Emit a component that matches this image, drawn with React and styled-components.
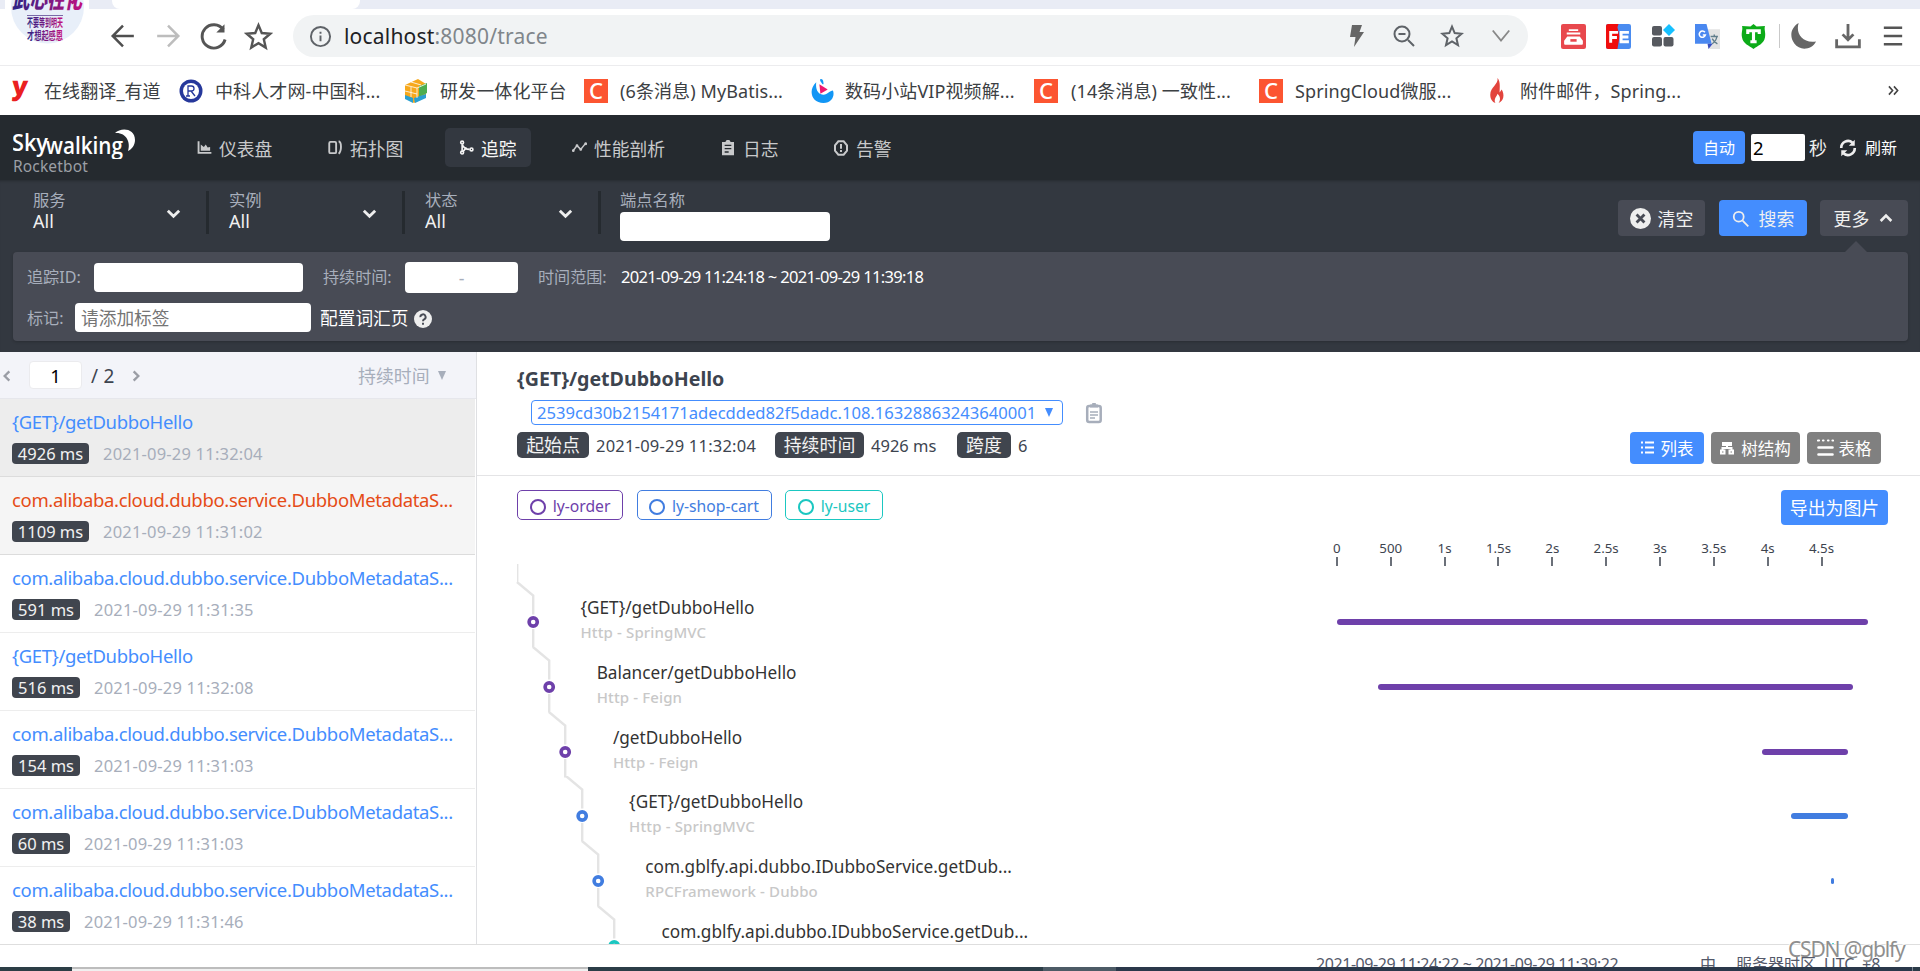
import React from 'react'
import styled, { createGlobalStyle } from 'styled-components';

const GlobalStyle = createGlobalStyle`
  * { box-sizing: border-box; }
  body {
    margin: 0;
    overflow: hidden;
    background: #fff;
    font-family: "Noto Sans", "Noto Sans CJK SC", sans-serif;
    color: #3d444f;
  }
  input { font-family: inherit; }
  svg { display: block; flex: none; }
`;

const Page = styled.div`
  width: 1920px;
  height: 971px;
  overflow: hidden;
  display: flex;
  flex-direction: column;
  position: relative;
`;

/* the small top padding centres the glyphs optically inside a row */
const Text = styled.span`
  white-space: nowrap;
  flex: none;
  line-height: 1.2;
  padding-top: ${(p) => p.$pt ?? 2}px;
  font-size: ${(p) => p.$size || 18}px;
  color: ${(p) => p.$color || 'inherit'};
  font-weight: ${(p) => p.$weight || 400};
  letter-spacing: ${(p) => p.$ls || 0}px;
  width: ${(p) => (p.$w ? p.$w + 'px' : 'auto')};
  margin-left: ${(p) => p.$ml || 0}px;
`;

const Icon = styled.svg.attrs((p) => ({
  width: p.$s || 20,
  height: p.$h || p.$s || 20,
  viewBox: p.viewBox || '0 0 24 24',
  fill: p.fill || 'none',
  stroke: p.stroke || 'none',
}))`
  margin-left: ${(p) => p.$ml || 0}px;
  margin-top: ${(p) => p.$mt || 0}px;
`;

/* ---------- browser ---------- */

const TabStrip = styled.div`
  height: 9px;
  flex: none;
  background: #e9ecf5;
  padding-left: 112px;
`;
const ActiveTab = styled.div`
  width: 248px;
  height: 9px;
  background: #fff;
  border-radius: 0 0 8px 8px;
`;
const Toolbar = styled.div`
  height: 57px;
  flex: none;
  display: flex;
  align-items: center;
  border-bottom: 1px solid #ececee;
  padding: 0 0 2px 110px;
`;
const Avatar = styled.div`
  position: absolute;
  left: 5px;
  top: 0;
  width: 84px;
  height: 48px;
  background: #fff;
`;
const UrlBox = styled.div`
  width: 1235px;
  height: 42px;
  margin-left: 20px;
  border-radius: 21px;
  background: #f1f3f4;
  display: flex;
  align-items: center;
  padding-left: 16px;
  flex: none;
`;
const Separator = styled.div`
  width: 1px;
  height: 24px;
  background: #c9c9c9;
  margin-left: 13px;
`;
const Bookmarks = styled.div`
  height: 49px;
  flex: none;
  display: flex;
  align-items: center;
`;
const Bookmark = styled.div`
  width: ${(p) => p.$w}px;
  display: flex;
  align-items: center;
  flex: none;
`;
const BookmarkIcon = styled.div`
  width: ${(p) => p.$w}px;
  flex: none;
  display: flex;
  justify-content: center;
`;
const BookmarkText = styled(Text).attrs({ $size: 18, $color: '#3c4043' })`
  letter-spacing: 0.1px;
`;
const Youdao = styled.div`
  color: #ea2020;
  font-size: 26px;
  font-weight: 900;
  line-height: 36px;
  margin-top: -11px;
  transform: skewX(-5deg);
`;
const CBadge = styled.div`
  width: 24px;
  height: 24px;
  background: #fc5531;
  display: flex;
  align-items: center;
  justify-content: center;
`;

/* ---------- rocketbot header ---------- */

const Header = styled.header`
  height: 65px;
  flex: none;
  background: #252a2f;
  display: flex;
  align-items: center;
  color: #d3d4d5;
`;
const Brand = styled.div`
  width: 183px;
  padding: 12px 0 0 13px;
  height: 65px;
  display: flex;
  flex-direction: column;
`;
const BrandName = styled.div`
  font-size: 15.5px;
  line-height: 18px;
  letter-spacing: 0.15px;
  margin-top: -2px;
  color: #9b9fa5;
`;
const Nav = styled.nav`
  display: flex;
  flex: 1;
  gap: 27px;
  align-items: center;
`;
const NavItem = styled.a`
  height: 39px;
  width: ${(p) => p.$w}px;
  padding: 0 0 0 14px;
  border-radius: 5px;
  display: flex;
  align-items: center;
  gap: 7px;
  background: ${(p) => (p.$active ? '#333840' : 'transparent')};
  color: ${(p) => (p.$active ? '#f5f5f5' : '#c8c9cb')};
`;
const NavText = styled(Text).attrs({ $size: 17.8, $pt: 5 })``;
const Reload = styled.div`
  width: 227px;
  display: flex;
  align-items: center;
`;
const AutoButton = styled.div`
  width: 52px;
  height: 33px;
  border-radius: 4px;
  background: #448dfe;
  color: #fff;
  display: flex;
  align-items: center;
  justify-content: center;
`;
const SecondsInput = styled.input`
  width: 54px;
  height: 27px;
  margin: 0 4px 0 6px;
  border: 0;
  border-radius: 2px;
  padding: 0 0 0 2px;
  font-size: 18.5px;
  color: #000;
`;

/* ---------- filter ---------- */

const Filters = styled.section`
  height: 172px;
  flex: none;
  background: #333840;
  padding: 0 12px 0 13px;
  box-shadow: inset 0 3px 3px -2px rgba(0, 0, 0, .25);
`;
const FilterTop = styled.div`
  height: 72px;
  display: flex;
  padding-top: 11px;
`;
const Select = styled.div`
  width: 196px;
  height: 43px;
  padding: 0 24px 0 20px;
  border-right: 3px solid #252a2f;
  display: flex;
  align-items: center;
  justify-content: space-between;
`;
const SelectText = styled.div`
  display: flex;
  flex-direction: column;
  gap: 1px;
  margin-top: -1px;
`;
const Endpoint = styled.div`
  padding-left: 19px;
  flex: 1;
  display: flex;
  flex-direction: column;
  gap: 1px;
`;
const Field = styled.input`
  width: ${(p) => p.$w}px;
  height: ${(p) => p.$h || 29}px;
  flex: none;
  border: 0;
  border-radius: 4px;
  padding: 1px 6px 0;
  font-size: 17.7px;
  text-align: ${(p) => (p.$center ? 'center' : 'left')};
  &::placeholder { color: ${(p) => (p.$center ? '#a7aebb' : '#757575')}; }
`;
const FilterButton = styled.button`
  width: ${(p) => p.$w}px;
  height: 36px;
  margin: 9px 0 0 ${(p) => p.$ml || 0}px;
  padding: 0;
  border: 0;
  border-radius: 4px;
  font-family: inherit;
  background: ${(p) => (p.$primary ? '#448dfe' : '#484b55')};
  color: #f0f0f0;
  display: flex;
  align-items: center;
  justify-content: center;
  gap: ${(p) => p.$gap || 8}px;
`;
const More = styled.div`
  height: 89px;
  border-radius: 4px;
  background: #484b55;
  color: #a7aebb;
  padding: 9px 0 0 14px;
  position: relative;
  box-shadow: 0 1px 3px rgba(0, 0, 0, .2);
  &::before {
    content: '';
    position: absolute;
    right: 41px;
    top: -11px;
    border: 11px solid transparent;
    border-top: 0;
    border-bottom-color: #484b55;
  }
`;
const MoreRow = styled.div`
  height: ${(p) => p.$h}px;
  display: flex;
  align-items: center;
`;

/* ---------- trace list ---------- */

const Main = styled.main`
  height: 593px;
  flex: none;
  display: flex;
  border-bottom: 1px solid #dedede;
`;
const TraceList = styled.aside`
  width: 477px;
  flex: none;
  border-right: 1px solid #dfe0e3;
  overflow: hidden;
`;
const ListHead = styled.div`
  height: 47px;
  background: #f3f4f9;
  border-bottom: 1px solid #e6e7ec;
  display: flex;
  align-items: center;
`;
const PageInput = styled.input`
  width: 53px;
  height: 28px;
  margin: 0 8px 0 15px;
  border: 1px solid #ebebee;
  border-radius: 4px;
  text-align: center;
  font-size: 18.5px;
  color: #000;
  padding: 1px 0 0;
`;
const Trace = styled.div`
  height: 78px;
  width: 475px;
  padding: 9px 12px 0;
  border-bottom: 1px solid ${(p) => (p.$bg ? '#dcdcdc' : '#ededed')};
  background: ${(p) => p.$bg || '#fff'};
`;
const TraceMeta = styled.div`
  display: flex;
  align-items: center;
  height: 21px;
  margin-top: 8px;
  gap: 14px;
`;
const TraceTitle = styled.div`
  height: 27px;
  line-height: 27px;
  font-size: 18.5px;
  letter-spacing: -0.34px;
  white-space: nowrap;
  color: ${(p) => (p.$error ? '#e54c17' : '#448dfe')};
`;
const Duration = styled.div`
  width: ${(p) => p.$w}px;
  height: 21px;
  border-radius: 4px;
  background: #40454e;
  color: #f2f2f2;
  display: flex;
  align-items: center;
  justify-content: center;
`;

/* ---------- trace detail ---------- */

const Detail = styled.section`
  flex: 1;
  overflow: hidden;
`;
const DetailHead = styled.div`
  height: 124px;
  border-bottom: 1px solid #e4e4e6;
  padding: 13px 39px 0 40px;
`;
const TraceIdRow = styled.div`
  display: flex;
  align-items: center;
  margin: 9px 0 0 14px;
`;
const TraceId = styled.div`
  width: 532px;
  height: 25px;
  border: 1px solid #448dfe;
  border-radius: 4px;
  color: #448dfe;
  display: flex;
  align-items: center;
  padding-left: 5px;
`;
const Summary = styled.div`
  display: flex;
  margin-top: 7px;
  height: 32px;
`;
const Tag = styled.div`
  width: ${(p) => p.$w}px;
  height: 26px;
  margin: 0 7px 0 ${(p) => p.$ml || 0}px;
  border-radius: 5px;
  background: #40454e;
  color: #f2f2f2;
  display: flex;
  align-items: center;
  justify-content: center;
`;
const SummaryValue = styled.div`
  height: 26px;
  display: flex;
  align-items: center;
`;
const ViewButtons = styled.div`
  margin-left: auto;
  display: flex;
  gap: 7px;
`;
const ViewButton = styled.div`
  width: ${(p) => p.$w}px;
  height: 32px;
  border-radius: 4px;
  background: ${(p) => (p.$active ? '#448dfe' : '#808080')};
  color: #fff;
  display: flex;
  align-items: center;
  justify-content: center;
  gap: ${(p) => p.$gap || 7}px;
`;
const Legend = styled.div`
  height: 49px;
  padding: 14px 32px 0 40px;
  display: flex;
  align-items: flex-start;
`;
const LegendItem = styled.div`
  width: ${(p) => p.$w}px;
  height: 30px;
  margin-right: 13.5px;
  border: 1px solid ${(p) => p.$color};
  color: ${(p) => p.$color};
  border-radius: 5px;
  display: flex;
  align-items: center;
  justify-content: center;
  gap: 7px;
`;
const Ring = styled.i`
  width: 16px;
  height: 16px;
  border: 2.5px solid currentColor;
  border-radius: 50%;
  margin-top: 4px;
`;
const ExportButton = styled.div`
  width: 107px;
  height: 35px;
  margin-left: auto;
  border-radius: 4px;
  background: #448dfe;
  color: #fff;
  display: flex;
  align-items: center;
  justify-content: center;
`;
const AxisRow = styled.div`
  height: 57px;
  display: flex;
  align-items: flex-start;
  justify-content: space-between;
  padding: 14px 0 0 40px;
`;
const Axis = styled.div`
  display: flex;
  width: 610px;
`;
const TickMark = styled.div`
  width: 53.85px;
  display: flex;
  flex-direction: column;
  align-items: center;
  &::after {
    content: '';
    width: 2px;
    height: 9px;
    background: #6b7079;
  }
`;
const Span = styled.div`
  height: 64.75px;
  display: flex;
  padding-left: ${(p) => 38 + p.$depth * 16.2}px;
`;
const SpanText = styled.div`
  flex: 1;
  display: flex;
  flex-direction: column;
  padding: 14px 0 0 35.5px;
  gap: 2.5px;
`;
const Track = styled.div`
  width: 583px;
  flex: none;
  padding-top: 37px;
`;
const Bar = styled.div`
  height: 6px;
  border-radius: 3px;
  background: ${(p) => p.$color};
`;

/* ---------- bottom ---------- */

const Footer = styled.footer`
  height: 22px;
  flex: none;
  overflow: hidden;
  display: flex;
  align-items: flex-start;
  padding: 8px 0 0 1316px;
  color: #54596a;
`;
const Taskbar = styled.div`
  height: 4px;
  flex: none;
  display: flex;
  background: #2b3b48;
`;
const TaskbarItem = styled.div`
  width: ${(p) => p.$w}px;
  height: 4px;
  background: ${(p) => p.$bg};
  border-top: ${(p) => (p.$line ? '2px solid #bdbdbd' : '0')};
`;
const Watermark = styled.div`
  position: absolute;
  left: 1788px;
  top: 935px;
  font-size: 21px;
  line-height: 28px;
  letter-spacing: -1.2px;
  white-space: nowrap;
  color: #8f8f8f;
  text-shadow: -1px -1px 0 rgba(255, 255, 255, .8);
`;

const purple = '#6e40aa';
const blue = '#417de0';
const teal = '#1bc7c1';

const traces = [
  { title: '{GET}/getDubboHello', ms: '4926 ms', w: 77, time: '2021-09-29 11:32:04', bg: '#ededed' },
  { title: 'com.alibaba.cloud.dubbo.service.DubboMetadataS...', ms: '1109 ms', w: 77, time: '2021-09-29 11:31:02', bg: '#f5f5f5', error: true },
  { title: 'com.alibaba.cloud.dubbo.service.DubboMetadataS...', ms: '591 ms', w: 68, time: '2021-09-29 11:31:35' },
  { title: '{GET}/getDubboHello', ms: '516 ms', w: 68, time: '2021-09-29 11:32:08' },
  { title: 'com.alibaba.cloud.dubbo.service.DubboMetadataS...', ms: '154 ms', w: 68, time: '2021-09-29 11:31:03' },
  { title: 'com.alibaba.cloud.dubbo.service.DubboMetadataS...', ms: '60 ms', w: 58, time: '2021-09-29 11:31:03' },
  { title: 'com.alibaba.cloud.dubbo.service.DubboMetadataS...', ms: '38 ms', w: 58, time: '2021-09-29 11:31:46' },
];

const spans = [
  { name: '{GET}/getDubboHello', layer: 'Http - SpringMVC', color: purple, start: 0, width: 531 },
  { name: 'Balancer/getDubboHello', layer: 'Http - Feign', color: purple, start: 40.5, width: 475 },
  { name: '/getDubboHello', layer: 'Http - Feign', color: purple, start: 424.5, width: 86 },
  { name: '{GET}/getDubboHello', layer: 'Http - SpringMVC', color: blue, start: 454, width: 57 },
  { name: 'com.gblfy.api.dubbo.IDubboService.getDub...', layer: 'RPCFramework - Dubbo', color: blue, start: 494, width: 2.5 },
  { name: 'com.gblfy.api.dubbo.IDubboService.getDub...', layer: 'RPCFramework - Dubbo', color: teal, start: 494.5, width: 2 },
];

const ticks = ['0', '500', '1s', '1.5s', '2s', '2.5s', '3s', '3.5s', '4s', '4.5s'];

const Chevron = ({ d = 'M4 8l8 8 8-8', size = 17, color = '#eee', sw = 4, ml }) => (
  <Icon $s={size} $ml={ml} $mt={1} stroke={color} strokeWidth={sw}><path d={d} /></Icon>
);

const Star = ({ size, ml, color = '#555' }) => (
  <Icon $s={size} $ml={ml} stroke={color} strokeWidth="2" strokeLinejoin="miter">
    <path d="M12 2.600l2.700 6.500 7 .6-5.300 4.600 1.600 6.900L12 17.500l-6 3.700 1.600-6.900L2.300 9.700l7-.6z" />
  </Icon>
);

const CIcon = () => (
  <CBadge><Text $size={22} $color="#fff" $weight={500} $pt={0}>C</Text></CBadge>
);

const SkyLogo = () => (
  <svg width="126" height="32" viewBox="0 0 126 32">
    <text x="-1" y="24" fontFamily="Open Sans" fontSize="24" fontWeight="600" fill="#fff" textLength="36" lengthAdjust="spacingAndGlyphs">Sky</text>
    <text x="33" y="27" fontFamily="Open Sans" fontSize="23" fontWeight="600" fill="#fff" textLength="77" lengthAdjust="spacingAndGlyphs">walking</text>
    <path d="M102 6C108 0 122 1 122 13C122 18 119 22 115 24C118 15 113 5 102 6Z" fill="#fff" />
  </svg>
);

const Browser = () => (
  <>
    <TabStrip><ActiveTab /></TabStrip>
    <Toolbar>
      <Icon $s={26} stroke="#4f4f4f" strokeWidth="2.300"><path d="M22 12H3M12 2.500L2.500 12l9.500 9.500" /></Icon>
      <Icon $s={26} $ml={19} stroke="#bdbdbd" strokeWidth="2.300"><path d="M2 12h19M12 2.500l9.500 9.500-9.500 9.500" /></Icon>
      <Icon $s={28} $ml={19} stroke="#555" strokeWidth="2.500"><path d="M20 6.500A10 10 0 1 0 21.500 15" /><path d="M21 2v7h-7z" fill="#555" stroke="none" /></Icon>
      <Star size={29} ml={16} />
      <UrlBox>
        <Icon $s={23} stroke="#5f6368" strokeWidth="2"><circle cx="12" cy="12" r="10" /><path d="M12 11v6M12 7v2" /></Icon>
        <Text $size={21} $color="#202124" $ml={12} $w={202} $ls={0.2}>localhost<Text $size={21} $color="#80868b" $ls={0.2}>:8080/trace</Text></Text>
        <Icon $s={24} $ml={799} fill="#666"><path d="M7 1h10l-2.500 7H19L9 23l1.500-10H5z" /></Icon>
        <Icon $s={24} $ml={23} stroke="#5f6368" strokeWidth="2"><circle cx="10" cy="10" r="7.500" /><path d="M16 16l6 6M6.500 10h7" /></Icon>
        <Star size={24} ml={24} color="#5f6368" />
        <Icon $s={22} $ml={26} stroke="#888" strokeWidth="2"><path d="M3 6l9 11 9-11" /></Icon>
      </UrlBox>
      <Icon $s={25} $ml={33}>
        <rect width="24" height="24" rx="2" fill="#e8484d" />
        <path d="M7.500 5h9v1.800h-9zM5.500 8.200h13v1.800h-13zM6 12h12l3 4v3q0 1-1 1H4q-1 0-1-1v-3z" fill="#fff" /><path d="M9 14.500h6V17H9z" fill="#e8484d" />
      </Icon>
      <Icon $s={25} $ml={20}>
        <rect width="24" height="24" rx="2" fill="#4a8cf0" /><path d="M2 0h10l-1 3 2 9-2 12H2q-2 0-2-2V2q0-2 2-2z" fill="#f00d0d" />
        <path d="M4.500 18V8h7M4.500 13h6M22 8h-7.500v9H22M14.500 12.500h7" stroke="#fff" strokeWidth="2.800" />
      </Icon>
      <Icon $s={24} $ml={20} fill="#575a60">
        <rect x="1" y="2" width="10" height="9.500" rx="2" /><rect x="1" y="13" width="10" height="9.500" rx="2" /><rect x="12.500" y="13" width="10" height="9.500" rx="2" />
        <path d="M18 0l6 6-6 6-6-6z" fill="#16c0ff" />
      </Icon>
      <Icon $s={25} $ml={20}>
        <path d="M9 5h15v19H14z" fill="#e3e3e3" /><path d="M0 0h11l5 19H0z" fill="#4a88f0" /><path d="M12 19h5l-4 5z" fill="#3a4fc0" />
        <path d="M9.500 8A3 3 0 1 0 10 10.500H7.500" stroke="#fff" strokeWidth="1.500" /><path d="M15 12h7M18.500 10v2M16.500 19c3-2 4-4 4.500-7M16.500 14c1 2 2 3.500 5 5" stroke="#607d8b" strokeWidth="1.300" />
      </Icon>
      <Icon $s={25} $ml={21}>
        <path d="M12 0l3 2.500 8-.5c-1 4 1 6 0 11-1 6-7 8-11 11C8 21 2 19 1 13 0 8 2 6 1 2l8 .5z" fill="#0cab18" /><path d="M6.500 9.500V6.500h11v3M12 6v11M9 17h6" stroke="#fff" strokeWidth="3" />
      </Icon>
      <Separator />
      <Icon $s={26} $ml={10} fill="#666"><path d="M8 0C5 9 11 19 24 17C20 25 9 26 4 19C-1 12 1 4 8 0Z" /></Icon>
      <Icon $s={26} $ml={19} stroke="#666" strokeWidth="2.600"><path d="M12 1v14M7 10.500l5 5 5-5M1.500 15v7h21v-7" /></Icon>
      <Icon $s={22} $ml={21} stroke="#555" strokeWidth="2.700"><path d="M2 3h20M2 12h20M2 21h20" /></Icon>
    </Toolbar>
    <Avatar>
      <svg width="84" height="48" viewBox="0 0 84 48">
        <defs>
          <linearGradient id="ink" x1="0" x2="1" y1="0" y2="0">
            <stop offset="0" stopColor="#2b2385" />
            <stop offset="1" stopColor="#c4107f" />
          </linearGradient>
        </defs>
        <circle cx="42.500" cy="7" r="36.500" fill="#e8eff9" />
        <text x="7" y="8" fontSize="24" fontWeight="900" fontStyle="italic" fill="url(#ink)" fontFamily="Noto Sans CJK SC" textLength="70" lengthAdjust="spacingAndGlyphs">武心在化</text>
        <path d="M22 15.500h36" stroke="#7a6aa8" />
        <text x="22" y="27" fontSize="11.500" fontWeight="700" fill="url(#ink)" fontFamily="Noto Sans CJK SC" textLength="36" lengthAdjust="spacingAndGlyphs">不要等到明天</text>
        <text x="22" y="40" fontSize="11.500" fontWeight="700" fill="url(#ink)" fontFamily="Noto Sans CJK SC" textLength="36" lengthAdjust="spacingAndGlyphs">才想起感恩</text>
      </svg>
    </Avatar>
    <Bookmarks>
      <Bookmark $w={179}>
        <BookmarkIcon $w={40}><Youdao>y</Youdao></BookmarkIcon>
        <BookmarkText $ml={4}>在线翻译_有道</BookmarkText>
      </Bookmark>
      <Bookmark $w={225}>
        <BookmarkIcon $w={24}>
          <Icon $s={24}><circle cx="12" cy="12" r="11.500" fill="#26389b" /><circle cx="12" cy="12" r="8" fill="#fff" /><path d="M9 17V7h3.500a2.500 2.500 0 0 1 0 5H9M12 12l4 5M7 17h4" stroke="#26389b" strokeWidth="1.300" /></Icon>
        </BookmarkIcon>
        <BookmarkText $ml={12}>中科人才网-中国科...</BookmarkText>
      </Bookmark>
      <Bookmark $w={180}>
        <BookmarkIcon $w={24}>
          <Icon $s={24}><path d="M1 6l13-6 8 5v13l-12 6-9-5z" fill="#f6a81c" /><path d="M15 7l8-3v10l-8 4z" fill="#4cae50" /><path d="M1 16l8 3v5l-8-4zM10 19l12-4v4l-11 5z" fill="#2a9fd0" /><path d="M1 6l12 3v10M1 12l12 3M7 3l10 3M7 8v10M13 9l9-4" stroke="#fff" strokeWidth=".8" /></Icon>
        </BookmarkIcon>
        <BookmarkText $ml={12}>研发一体化平台</BookmarkText>
      </Bookmark>
      <Bookmark $w={226}>
        <CIcon />
        <BookmarkText $ml={12}>(6条消息) MyBatis...</BookmarkText>
      </Bookmark>
      <Bookmark $w={224}>
        <BookmarkIcon $w={24}>
          <Icon $s={25}><path d="M6 4C-2 11 1 24 13 24c8 0 11-7 9-12-3 0-5 4-9 4-5 0-8-5-7-12z" fill="#1296f5" /><path d="M12 6c-1-2-3-3-2-5 2 0 3 1 3 5" fill="#1296f5" /><path d="M9 6l8 5-7 4z" fill="#f0186f" /></Icon>
        </BookmarkIcon>
        <BookmarkText $ml={11}>数码小站VIP视频解...</BookmarkText>
      </Bookmark>
      <Bookmark $w={225}>
        <CIcon />
        <BookmarkText $ml={13}>(14条消息) 一致性...</BookmarkText>
      </Bookmark>
      <Bookmark $w={225}>
        <CIcon />
        <BookmarkText $ml={12}>SpringCloud微服...</BookmarkText>
      </Bookmark>
      <Bookmark $w={404}>
        <BookmarkIcon $w={24}>
          <Icon $s={25} fill="#e2443d"><path d="M13 0c1 6-7 9-7 16 0 4 2 7 5 8-2-4 1-6 2-9 3 3 3 6 1 9 5-2 6-8 3-13l-2 3C15 9 16 4 13 0z" /></Icon>
        </BookmarkIcon>
        <BookmarkText $ml={12}>附件邮件，Spring...</BookmarkText>
      </Bookmark>
      <Icon $s={11} stroke="#444" strokeWidth="3.500"><path d="M2 3l8 9-8 9M13 3l8 9-8 9" /></Icon>
    </Bookmarks>
  </>
);

const HeaderBar = () => (
  <Header>
    <Brand>
      <SkyLogo />
      <BrandName>Rocketbot</BrandName>
    </Brand>
    <Nav>
      <NavItem $w={104}>
        <Icon $s={15} fill="currentColor"><path d="M1 2h3v17h19v3H1zM6 17V7l5 4 3-4 3 5 4-1v6z" /></Icon>
        <NavText>仪表盘</NavText>
      </NavItem>
      <NavItem $w={104}>
        <Icon $s={15} stroke="currentColor" strokeWidth="3"><rect x="2" y="3" width="11" height="18" rx="2" /><path d="M17 2c5 1 5 16 0 20" /></Icon>
        <NavText>拓扑图</NavText>
      </NavItem>
      <NavItem $w={86} $active>
        <Icon $s={15} stroke="currentColor" strokeWidth="2.600"><circle cx="5" cy="4" r="2.300" /><circle cx="5" cy="20" r="2.300" /><circle cx="20" cy="15" r="2.300" /><path d="M5 7v10M5 7c2 5 7 8 12 8M12 12l-6 7" /></Icon>
        <NavText>追踪</NavText>
      </NavItem>
      <NavItem $w={121}>
        <Icon $s={15} stroke="currentColor" strokeWidth="2.500"><path d="M1 18l7-9 6 6 8-10" /><circle cx="2" cy="17" r="1" /><circle cx="8" cy="9" r="1" /><circle cx="14" cy="15" r="1" /><circle cx="22" cy="6" r="1" /></Icon>
        <NavText>性能剖析</NavText>
      </NavItem>
      <NavItem $w={86}>
        <Icon $s={16}><path d="M3 3h5l2-3h4l2 3h5v20H3z" fill="currentColor" /><path d="M7 8h10M7 13h10M7 18h6" stroke="#252a2f" strokeWidth="2" /></Icon>
        <NavText>日志</NavText>
      </NavItem>
      <NavItem $w={87}>
        <Icon $s={16} stroke="currentColor" strokeWidth="3"><path d="M8 2h8l5 6v8l-5 6H8l-5-6V8z" /><path d="M12 6v7M12 15v3" /></Icon>
        <NavText>告警</NavText>
      </NavItem>
    </Nav>
    <Reload>
      <AutoButton><Text $size={16} $pt={3}>自动</Text></AutoButton>
      <SecondsInput defaultValue="2" />
      <Text $size={18} $color="#eee">秒</Text>
      <Icon $s={18} $ml={12} stroke="#eee" strokeWidth="3.500"><path d="M3 12a9 9 0 0 1 15-7M21 12a9 9 0 0 1-15 7" /><path d="M21 1v8h-8zM3 23v-8h8z" fill="#eee" stroke="none" /></Icon>
      <Text $size={16} $color="#fff" $ml={8} $pt={3}>刷新</Text>
    </Reload>
  </Header>
);

const FilterPanel = () => (
  <Filters>
    <FilterTop>
      {['服务', '实例', '状态'].map((label) => (
        <Select key={label}>
          <SelectText>
            <Text $size={16.3} $color="#a7aebb" $pt={0}>{label}</Text>
            <Text $size={18} $color="#f0f0f0" $pt={0}>All</Text>
          </SelectText>
          <Chevron />
        </Select>
      ))}
      <Endpoint>
        <Text $size={16.3} $color="#a7aebb" $pt={0}>端点名称</Text>
        <Field $w={210} />
      </Endpoint>
      <FilterButton $w={87} $gap={7}>
        <Icon $s={21}><circle cx="12" cy="12" r="12" fill="#eee" /><path d="M7.500 7.500l9 9M16.500 7.500l-9 9" stroke="#484b55" strokeWidth="3.200" /></Icon>
        <Text $size={17.9} $pt={4}>清空</Text>
      </FilterButton>
      <FilterButton $w={88} $ml={14} $primary $gap={10}>
        <Icon $s={17} stroke="#eee" strokeWidth="2.500"><circle cx="9.500" cy="9.500" r="7" /><path d="M15 15l8 8" /></Icon>
        <Text $size={17.9} $pt={4}>搜索</Text>
      </FilterButton>
      <FilterButton $w={88} $ml={13} $gap={9}>
        <Text $size={17.9} $pt={4}>更多</Text>
        <Chevron size={16} d="M4 15l8-8 8 8" />
      </FilterButton>
    </FilterTop>
    <More>
      <MoreRow $h={32}>
        <Text $size={16.1} $w={67}>追踪ID:</Text>
        <Field $w={209} />
        <Text $size={16.1} $ml={20} $w={82}>持续时间:</Text>
        <Field $w={113} $h={31} $center placeholder="-" />
        <Text $size={16.1} $ml={20} $w={83}>时间范围:</Text>
        <Text $size={16.500} $color="#fff" $ls={-0.67} $pt={0}>2021-09-29 11:24:18 ~ 2021-09-29 11:39:18</Text>
      </MoreRow>
      <MoreRow $h={48}>
        <Text $size={16.1} $w={48} $pt={3}>标记:</Text>
        <Field $w={236} placeholder="请添加标签" />
        <Text $size={17.7} $color="#fff" $ml={9} $pt={3}>配置词汇页</Text>
        <Icon $s={18} $ml={6} $mt={3}><circle cx="12" cy="12" r="12" fill="#eee" /><path d="M8.500 9.500a3.500 3.500 0 1 1 5 3c-1.200.6-1.500 1-1.500 2.500M12 17v2.600" stroke="#484b55" strokeWidth="2.600" /></Icon>
      </MoreRow>
    </More>
  </Filters>
);

const List = () => (
  <TraceList>
    <ListHead>
      <Chevron size={14} color="#9a9da5" d="M16 4l-8 8 8 8" />
      <PageInput defaultValue="1" />
      <Text $size={19} $w={38} $ml={1} $ls={0.3}>/ 2</Text>
      <Chevron size={14} color="#9a9da5" d="M8 4l8 8-8 8" />
      <Text $size={17.9} $color="#a7aebb" $ml={215} $pt={3}>持续时间</Text>
      <Icon $s={8} $h={9} $ml={8} viewBox="0 0 8 9" fill="#a7aebb"><path d="M0 0h8L4 9z" /></Icon>
    </ListHead>
    {traces.map((t, i) => (
      <Trace key={i} $bg={t.bg}>
        <TraceTitle $error={t.error}>{t.title}</TraceTitle>
        <TraceMeta>
          <Duration $w={t.w}><Text $size={16.500} $pt={1}>{t.ms}</Text></Duration>
          <Text $size={16.500} $pt={1} $ls={0.2} $color="#a7aebb">{t.time}</Text>
        </TraceMeta>
      </Trace>
    ))}
  </TraceList>
);

const SpanRow = ({ span, depth }) => (
  <Span $depth={depth}>
    <svg width="30" height="67" viewBox="0 0 30 67">
      <path d="M2 0L18.200 13.500V32.500M18.200 47V65.500" stroke="#e4e4e4" strokeWidth="2.400" fill="none" />
      <circle cx="18.200" cy="40" r="4.100" stroke={span.color} strokeWidth="3.600" fill="#fff" />
    </svg>
    <SpanText>
      <Text $size={17.2} $color="#333">{span.name}</Text>
      <Text $size={15} $color="#c8c8c8" $ls={0.13} $weight={500}>{span.layer}</Text>
    </SpanText>
    <Track>
      <Bar $color={span.color} style={{ marginLeft: span.start, width: span.width }} />
    </Track>
  </Span>
);

const TraceDetail = () => (
  <Detail>
    <DetailHead>
      <Text as="div" $size={19.6} $weight={700}>{'{GET}/getDubboHello'}</Text>
      <TraceIdRow>
        <TraceId>
          <Text $size={16.6} $w={508}>2539cd30b2154171adecdded82f5dadc.108.16328863243640001</Text>
          <Icon $s={8} $h={9} viewBox="0 0 8 9" fill="#448dfe"><path d="M0 0h8L4 9z" /></Icon>
        </TraceId>
        <Icon $s={18} $h={21} $ml={22} $mt={2} viewBox="0 0 18 21" stroke="#a7aebb">
          <rect x="2.200" y="3" width="13.500" height="16" rx="2" strokeWidth="2.500" /><path d="M5 4V2h2l1-2h2l1 2h2v2z" fill="#a7aebb" /><path d="M5 9h8M5 12h8M5 15h5" strokeWidth="1.400" />
        </Icon>
      </TraceIdRow>
      <Summary>
        <Tag $w={72}><Text $size={17.9}>起始点</Text></Tag>
        <SummaryValue><Text $size={16.500} $ls={0.22} $w={159}>2021-09-29 11:32:04</Text></SummaryValue>
        <Tag $w={89} $ml={20}><Text $size={17.9}>持续时间</Text></Tag>
        <SummaryValue><Text $size={16.500} $w={66}>4926 ms</Text></SummaryValue>
        <Tag $w={54} $ml={20}><Text $size={17.9}>跨度</Text></Tag>
        <SummaryValue><Text $size={16.500}>6</Text></SummaryValue>
        <ViewButtons>
          <ViewButton $w={74} $active>
            <Icon $s={13} viewBox="0 0 13 13" stroke="#fff" strokeWidth="2"><path d="M0 1.500h2M0 6.500h2M0 11.500h2M4 1.500h9M4 6.500h9M4 11.500h9" /></Icon>
            <Text $size={16.5}>列表</Text>
          </ViewButton>
          <ViewButton $w={89}>
            <Icon $s={14} viewBox="0 0 14 14" stroke="#fff" strokeWidth="2"><path d="M3 2h8v2H3zM7 5v2M2.500 9.500V7h9v2.500" /><rect x="1" y="9.500" width="3.500" height="3" /><rect x="9.500" y="9.500" width="3.500" height="3" /></Icon>
            <Text $size={16.5}>树结构</Text>
          </ViewButton>
          <ViewButton $w={74} $gap={5}>
            <Icon $s={17} viewBox="0 0 17 17" stroke="#fff" strokeWidth="2.600" strokeLinecap="round"><path d="M1 1.500h1M6 1.500h.5M11 1.500h.5M15.500 1.500h.5" strokeWidth="2.200" /><path d="M1.500 8.500h14M1.500 15.500h14" /></Icon>
            <Text $size={16.5}>表格</Text>
          </ViewButton>
        </ViewButtons>
      </Summary>
    </DetailHead>
    <Legend>
      <LegendItem $w={106} $color={purple}><Ring /><Text $size={15.700}>ly-order</Text></LegendItem>
      <LegendItem $w={135} $color={blue}><Ring /><Text $size={15.700}>ly-shop-cart</Text></LegendItem>
      <LegendItem $w={98} $color={teal}><Ring /><Text $size={15.700}>ly-user</Text></LegendItem>
      <ExportButton><Text $size={17.9}>导出为图片</Text></ExportButton>
    </Legend>
    <AxisRow>
      <svg width="4" height="57" viewBox="0 0 4 57"><path d="M.7 25v18" stroke="#e4e4e4" strokeWidth="1.400" /></svg>
      <Axis>
        {ticks.map((t) => <TickMark key={t}><Text $size={13.3}>{t}</Text></TickMark>)}
      </Axis>
    </AxisRow>
    {spans.map((s, i) => <SpanRow key={i} span={s} depth={i} />)}
  </Detail>
);

const App = () => {
  return (
    <Page>
      <GlobalStyle />
      <Browser />
      <HeaderBar />
      <FilterPanel />
      <Main>
        <List />
        <TraceDetail />
      </Main>
      <Footer>
        <Text $size={16} $ls={-0.43} $w={384}>2021-09-29 11:24:22 ~ 2021-09-29 11:39:22</Text>
        <Text $size={16} $w={36}>中</Text>
        <Text $size={16} $w={88}>服务器时区</Text>
        <Text $size={16} $w={38}>UTC</Text>
        <Text $size={16}>±8</Text>
      </Footer>
      <Taskbar>
        <TaskbarItem $w={72} $bg="#2c3e46" />
        <TaskbarItem $w={516} $bg="#f0f0f0" $line />
        <TaskbarItem $w={455} $bg="#2b3d47" />
        <TaskbarItem $w={73} $bg="#4d5b66" />
        <TaskbarItem $w={796} $bg="#2a384a" />
        <TaskbarItem $w={1} $bg="#7b8590" />
      </Taskbar>
      <Watermark>CSDN @gblfy</Watermark>
    </Page>
  )
}

export default App
